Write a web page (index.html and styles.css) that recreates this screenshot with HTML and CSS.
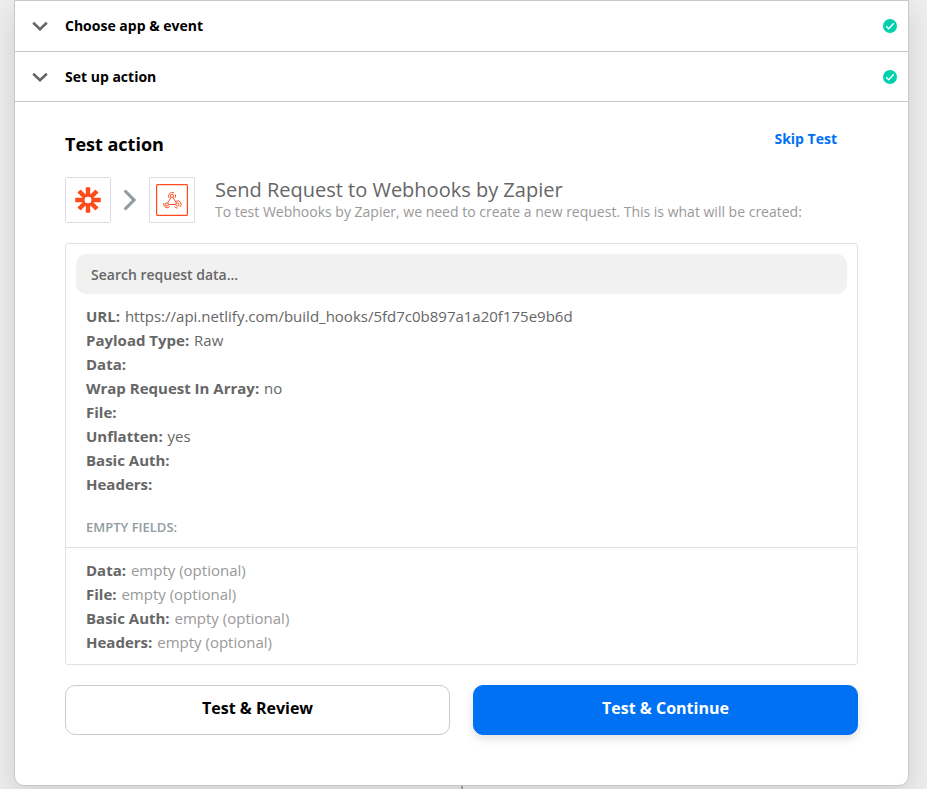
FILE: index.html
```html
<!DOCTYPE html>
<html lang="en">
<head>
<meta charset="utf-8">
<title>Test action</title>
<link rel="stylesheet" href="styles.css">
</head>
<body>
<main class="card">
  <header class="step">
    <svg class="chevron" width="16" height="10" viewBox="0 0 16 10"><path d="M1.200 1.700 8 8.100l6.800-6.400"/></svg>
    <span class="step-title">Choose app &amp; event</span>
    <svg class="done" width="14" height="14" viewBox="0 0 14 14"><circle cx="7" cy="7" r="7"/><path d="M3.200 7.300 5.700 9.700 10.800 4.300"/></svg>
  </header>
  <header class="step step-second">
    <svg class="chevron" width="16" height="10" viewBox="0 0 16 10"><path d="M1.200 1.700 8 8.100l6.800-6.400"/></svg>
    <span class="step-title">Set up action</span>
    <svg class="done" width="14" height="14" viewBox="0 0 14 14"><circle cx="7" cy="7" r="7"/><path d="M3.200 7.300 5.700 9.700 10.800 4.300"/></svg>
  </header>
  <section class="content">
    <div class="heading">
      <h1>Test action</h1>
      <a class="skip">Skip Test</a>
    </div>
    <div class="summary">
      <div class="app">
        <svg width="26" height="26" viewBox="-13 -13 26 26"><g stroke="#ff4a1c" stroke-width="4.400"><path d="M0-12.800V-3.500M0 3.500V12.800M-12.800 0H-3.500M3.500 0H12.800M-9-9-2.600-2.600M2.600 2.600 9 9M9-9 2.600-2.600M-2.600 2.600-9 9"/></g><circle r="4.300" fill="none" stroke="#ff4a1c" stroke-width="2"/><circle r="3.300" fill="#fff"/></svg>
      </div>
      <svg class="arrow" width="14" height="22" viewBox="0 0 14 22"><path d="M2.600 2.500 11 11 2.600 19.500"/></svg>
      <div class="app">
        <svg width="32" height="32" viewBox="0 0 32 32" fill="none" stroke="#ff4a1c"><rect x=".6" y=".6" width="30.800" height="30.800" rx="1" stroke-width="1.200"/><g stroke-width=".95"><circle cx="16" cy="11.900" r="1.600"/><circle cx="10.900" cy="20.500" r="1.600"/><circle cx="21.300" cy="20.500" r="1.600"/><path d="M15.200 13.300 11.700 19.100M12.500 20.500H19.700M16.800 13.300 20.500 19.100"/><path d="M13.300 14.100A3.600 3.600 0 0 1 17.900 8.800M19.300 10.400A3.600 3.600 0 0 1 19 13.800M7.900 18.900A3.500 3.500 0 0 0 13.600 22.700M20.100 17.200A3.500 3.500 0 0 1 24 22.900M18.500 22.700A3.500 3.500 0 0 0 21.600 24"/></g></svg>
      </div>
      <div class="description">
        <h2>Send Request to Webhooks by Zapier</h2>
        <p>To test Webhooks by Zapier, we need to create a new request. This is what will be created:</p>
      </div>
    </div>
    <div class="request">
      <div class="search">Search request data...</div>
      <ul class="fields">
        <li><b>URL:</b> https://api.netlify.com/build_hooks/5fd7c0b897a1a20f175e9b6d</li>
        <li><b>Payload Type:</b> Raw</li>
        <li><b>Data:</b></li>
        <li><b>Wrap Request In Array:</b> no</li>
        <li><b>File:</b></li>
        <li><b>Unflatten:</b> yes</li>
        <li><b>Basic Auth:</b></li>
        <li><b>Headers:</b></li>
      </ul>
      <div class="empty-title">EMPTY FIELDS:</div>
      <ul class="fields empty">
        <li><b>Data:</b> empty (optional)</li>
        <li><b>File:</b> empty (optional)</li>
        <li><b>Basic Auth:</b> empty (optional)</li>
        <li><b>Headers:</b> empty (optional)</li>
      </ul>
    </div>
    <div class="actions">
      <button class="button">Test &amp; Review</button>
      <button class="button primary">Test &amp; Continue</button>
    </div>
  </section>
</main>
<div class="connector"></div>
</body>
</html>
```
FILE: styles.css
```css
* { box-sizing: border-box; }
body {
  margin: 0;
  height: 789px;
  overflow: hidden;
  background: #eee;
  font-family: "Open Sans", sans-serif;
  color: #000;
}
h1, h2, p, ul { margin: 0; padding: 0; }
.card {
  width: 895px;
  height: 786px;
  margin-left: 14px;
  background: #fff;
  border: 1px solid #c8c8c8;
  border-radius: 0 0 10px 10px;
  box-shadow: 0 10px 30px rgba(0, 0, 0, .13);
}
.step {
  display: flex;
  align-items: center;
  height: 51px;
  padding: 0 11px 0 17px;
  border-bottom: 1px solid #c8c8c8;
}
.step-second { height: 50px; }
.chevron { fill: none; stroke: #666; stroke-width: 2.6; }
.step-title { margin-left: 17px; font-size: 14px; font-weight: 700; line-height: 20px; }
.done { margin-left: auto; fill: #00d0ac; }
.done path { fill: none; stroke: #fff; stroke-width: 1.4; }
.content { padding: 27px 50px 0; }
.heading { display: flex; justify-content: space-between; padding-right: 21px; height: 48px; }
h1 { font-size: 18px; line-height: 30px; font-weight: 700; }
.skip { color: #0071f2; font-size: 14px; line-height: 20px; font-weight: 700; }
.summary { display: flex; align-items: center; height: 46px; }
.app {
  display: flex;
  align-items: center;
  justify-content: center;
  width: 46px;
  height: 46px;
  border: 1px solid #d8dee2;
  border-radius: 2px;
}
.arrow { margin: 0 12px; fill: none; stroke: #929b9f; stroke-width: 3.2; stroke-linecap: round; }
.description { margin-left: 20px; }
h2 { color: #666; font-size: 20px; line-height: 24px; font-weight: 400; white-space: nowrap; }
.description p { color: #999; font-size: 14px; line-height: 20px; white-space: nowrap; }
.request {
  width: 793px;
  height: 422px;
  margin-top: 20px;
  padding-top: 10px;
  border: 1px solid #dde2e4;
  border-radius: 3px;
}
.search {
  height: 40px;
  margin: 0 10px;
  padding-left: 15px;
  background: #f1f1f1;
  border-radius: 10px;
  color: #666;
  font-size: 14px;
  font-weight: 600;
  line-height: 41px;
}
.fields { list-style: none; padding: 10px 20px 0; color: #666; font-size: 15px; line-height: 24px; }
.fields b { margin-right: 1px; }
.empty-title {
  height: 52px;
  padding: 21px 20px 0;
  border-bottom: 1px solid #dde2e4;
  color: #919ca1;
  font-size: 13px;
  font-weight: 600;
  line-height: 20px;
}
.empty { color: #999; }
.empty b { color: #666; }
.actions { display: grid; grid-template-columns: 385px 385px; gap: 23px; margin-top: 20px; }
.button {
  height: 50px;
  padding: 0 0 5px;
  border: 1px solid #ccc;
  border-radius: 10px;
  background: #fff;
  color: #000;
  font: 700 16px/24px "Open Sans", sans-serif;
}
.primary {
  border-color: #0071f2;
  background: #0071f2;
  color: #fff;
  box-shadow: 0 4px 10px rgba(0, 0, 0, .12);
}
.connector { width: 2px; height: 3px; margin-left: 461px; background: #999; position: relative; }
```
